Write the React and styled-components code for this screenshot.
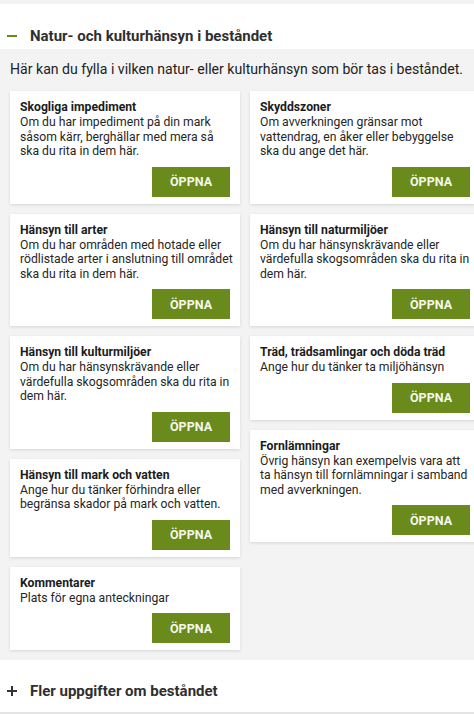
import React from 'react';
import styled, { createGlobalStyle } from 'styled-components';

const GlobalStyle = createGlobalStyle`
  html, body {
    margin: 0;
    padding: 0;
    background: #f3f3f3;
    overflow: hidden;
  }
  body {
    font-family: Roboto, "Liberation Sans", Arial, sans-serif;
    color: #212121;
  }
`;

const leftColumn = [
  {
    title: 'Skogliga impediment',
    text: 'Om du har impediment på din mark såsom kärr, berghällar med mera så ska du rita in dem här.'
  },
  {
    title: 'Hänsyn till arter',
    text: 'Om du har områden med hotade eller rödlistade arter i anslutning till området ska du rita in dem här.'
  },
  {
    title: 'Hänsyn till kulturmiljöer',
    text: 'Om du har hänsynskrävande eller värdefulla skogsområden ska du rita in dem här.'
  },
  {
    title: 'Hänsyn till mark och vatten',
    text: 'Ange hur du tänker förhindra eller begränsa skador på mark och vatten.'
  },
  {
    title: 'Kommentarer',
    text: 'Plats för egna anteckningar'
  }
];

const rightColumn = [
  {
    title: 'Skyddszoner',
    text: 'Om avverkningen gränsar mot vattendrag, en åker eller bebyggelse ska du ange det här.'
  },
  {
    title: 'Hänsyn till naturmiljöer',
    text: 'Om du har hänsynskrävande eller värdefulla skogsområden ska du rita in dem här.'
  },
  {
    title: 'Träd, trädsamlingar och döda träd',
    text: 'Ange hur du tänker ta miljöhänsyn'
  },
  {
    title: 'Fornlämningar',
    text: 'Övrig hänsyn kan exempelvis vara att ta hänsyn till fornlämningar i samband med avverkningen.'
  }
];

const Card = ({ title, text }) => (
  <CardBox>
    <CardTitle>{title}</CardTitle>
    <CardText>{text}</CardText>
    <CardFooter>
      <OpenButton>ÖPPNA</OpenButton>
    </CardFooter>
  </CardBox>
);

export default function App() {
  return (
    <>
      <GlobalStyle />
      <Page>
        <Section>
          <SectionHeader>
            <Toggle>
              <Bar />
            </Toggle>
            <SectionTitle>Natur- och kulturhänsyn i beståndet</SectionTitle>
          </SectionHeader>
          <SectionBody>
            <Intro>Här kan du fylla i vilken natur- eller kulturhänsyn som bör tas i beståndet.</Intro>
            <Columns>
              <Column>
                {leftColumn.map(c => (
                  <Card key={c.title} {...c} />
                ))}
              </Column>
              <Column>
                {rightColumn.map(c => (
                  <Card key={c.title} {...c} />
                ))}
              </Column>
            </Columns>
          </SectionBody>
        </Section>
        <Section $collapsed>
          <SectionHeader $tall>
            <Toggle>
              <Bar $dark />
              <Bar $dark $vertical />
            </Toggle>
            <SectionTitle>Fler uppgifter om beståndet</SectionTitle>
          </SectionHeader>
        </Section>
      </Page>
    </>
  );
}

const Page = styled.div`
  width: 474px;
  height: 714px;
  padding-top: 4px;
  box-sizing: border-box;
  overflow: hidden;
  background: #f3f3f3;
`;

const Section = styled.div`
  background: #ffffff;
  border-bottom: ${({ $collapsed }) => ($collapsed ? '2px solid #e4e4e4' : 'none')};
`;

const SectionHeader = styled.div`
  display: flex;
  align-items: center;
  height: ${({ $tall }) => ($tall ? '52px' : '45px')};
  padding-top: 18px;
  padding-bottom: ${({ $tall }) => ($tall ? '8px' : '0')};
  box-sizing: border-box;
`;

const Toggle = styled.span`
  position: relative;
  width: 30px;
  height: 10px;
  flex-shrink: 0;
`;

const Bar = styled.span`
  position: absolute;
  left: 7px;
  top: 4px;
  width: 10px;
  height: 2px;
  background: ${({ $dark }) => ($dark ? '#333333' : '#6a8a1c')};
  transform: ${({ $vertical }) => ($vertical ? 'rotate(90deg)' : 'none')};
`;

const SectionTitle = styled.h2`
  margin: 0;
  font-size: 15px;
  font-weight: 700;
  color: #2f2f2f;
`;

const SectionBody = styled.div`
  background: #f3f3f3;
  padding: 12px 0 10px 10px;
`;

const Intro = styled.p`
  margin: 0 0 14px 0;
  font-size: 14.1px;
  color: #222222;
  white-space: nowrap;
`;

const Columns = styled.div`
  display: flex;
  gap: 10px;
  align-items: flex-start;
  width: 470px;
`;

const Column = styled.div`
  display: flex;
  flex-direction: column;
  gap: 10px;
  width: 230px;
  flex-shrink: 0;
`;

const CardBox = styled.div`
  background: #ffffff;
  padding: 9px 7px 7px 10px;
  box-shadow: 0 1px 3px rgba(0, 0, 0, 0.12);
`;

const CardTitle = styled.div`
  font-size: 12.2px;
  font-weight: 700;
  line-height: 15px;
  color: #1c1c1c;
`;

const CardText = styled.div`
  font-size: 12.2px;
  line-height: 14.5px;
  color: #262626;
`;

const CardFooter = styled.div`
  display: flex;
  justify-content: flex-end;
  margin-top: 8px;
  padding-right: 3px;
`;

const OpenButton = styled.button`
  width: 78px;
  height: 30px;
  border: none;
  background: #6a8a1c;
  color: #f4f7ea;
  font-family: Roboto, "Liberation Sans", Arial, sans-serif;
  font-size: 12.5px;
  font-weight: 700;
  cursor: pointer;
`;
